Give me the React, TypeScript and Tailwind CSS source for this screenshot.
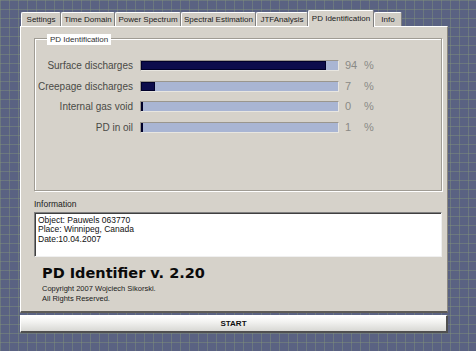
const rows = [
  { label: 'Surface discharges', value: 94 },
  { label: 'Creepage discharges', value: 7 },
  { label: 'Internal gas void', value: 0 },
  { label: 'PD in oil', value: 1 },
]

const tabs = [
  { name: 'Settings', w: 'w-[40px]' },
  { name: 'Time Domain', w: 'w-[54px]' },
  { name: 'Power Spectrum', w: 'w-[66px]' },
  { name: 'Spectral Estimation', w: 'w-[75px]' },
  { name: 'JTFAnalysis', w: 'w-[52px]' },
  { name: 'PD Identification', w: 'w-[66px]', active: true },
  { name: 'Info', w: 'w-[28px]' },
]

const sans = { fontFamily: '"Liberation Sans", Arial, sans-serif' }

export default function App() {
  return (
    <div
      className="w-[476px] h-[351px] overflow-hidden bg-[#5a6282] bg-[linear-gradient(rgba(140,160,120,0.35)_1px,transparent_1px),linear-gradient(90deg,rgba(140,160,120,0.35)_1px,transparent_1px)] bg-[size:9px_9px] pl-[20px] pt-[9px]"
      style={sans}
    >
      <div className="w-[428px] flex flex-col">
        {/* tabs */}
        <div className="flex items-end h-[17px] pl-[1px]">
          {tabs.map((t) =>
            t.active ? (
              <div
                key={t.name}
                className={`${t.w} h-[17px] -mb-[1px] relative z-10 bg-[#d6d2ca] border-t border-l border-white border-r border-r-[#808080] rounded-t-[2px] flex items-start justify-center pt-[2px] text-[8px] text-[#202020]`}
              >
                {t.name}
              </div>
            ) : (
              <div
                key={t.name}
                className={`${t.w} h-[14px] bg-[#d0ccc4] border-t border-l border-white border-r border-r-[#808080] rounded-t-[2px] flex items-center justify-center text-[8px] text-[#202020]`}
              >
                {t.name}
              </div>
            )
          )}
        </div>

        {/* panel */}
        <div className="h-[287px] bg-[#d6d2ca] border-t border-l border-white border-r border-r-[#8c8880] border-b-2 border-b-[#5c5a56] px-[13px] pt-[11px] flex flex-col">
          {/* group box */}
          <div className="relative h-[153px] w-[408px] border border-[#a09c94] shadow-[inset_1px_1px_0_#fff,1px_1px_0_#fff] pt-[21px]">
            <div className="absolute left-[12px] -top-[5px] bg-white px-[3px] h-[11px] flex items-center text-[8px] text-[#303030]">
              PD Identification
            </div>
            <div className="flex flex-col gap-[9.5px]">
              {rows.map((r) => (
                <div key={r.label} className="flex items-center h-[11px]">
                  <div className="w-[105px] text-right text-[10px] text-[#4a4a46] pr-[7px] whitespace-nowrap">
                    {r.label}
                  </div>
                  <div className="w-[199px] h-[11px] border border-[#9a968e] border-b-[#e8e6e0] border-r-[#e8e6e0] bg-[#a9b5d3] flex">
                    <div
                      className="h-full bg-[#0c0c4c] border border-[#00002a]"
                      style={{ width: `${Math.max(2, (r.value / 100) * 197)}px` }}
                    />
                  </div>
                  <div className="w-[25px] pl-[6px] text-[11px] text-[#8a8a86]">{r.value}</div>
                  <div className="text-[11px] text-[#8a8a86]">%</div>
                </div>
              ))}
            </div>
          </div>

          {/* information */}
          <div className="mt-[9px] text-[8.5px] text-[#202020] leading-none">Information</div>
          <div className="mt-[3px] w-[408px] h-[45px] bg-white border border-[#808080] border-b-[#f0f0f0] border-r-[#f0f0f0] shadow-[inset_1px_1px_0_#404040] px-[3px] pt-[3px] text-[8.5px] leading-[9.5px] text-[#101010]">
            <div>Object: Pauwels 063770</div>
            <div>Place: Winnipeg, Canada</div>
            <div>Date:10.04.2007</div>
          </div>

          {/* title */}
          <div
            className="mt-[6px] pl-[8px] text-[14.5px] font-bold leading-[20px] text-[#0a0a0a]"
            style={{ fontFamily: '"DejaVu Sans", Verdana, sans-serif' }}
          >
            PD Identifier v. 2.20
          </div>
          <div className="mt-[1px] pl-[8px] text-[7.5px] leading-[10px] text-[#202020]">
            <div>Copyright 2007 Wojciech Sikorski.</div>
            <div>All Rights Reserved.</div>
          </div>
        </div>

        {/* start button */}
        <div className="mt-[2px] w-[428px] h-[18px] bg-[linear-gradient(#ffffff,#f2f2f0_40%,#d8d8d4)] border-t border-l border-white border-r-2 border-r-[#505050] border-b-2 border-b-[#505050] flex items-center justify-center text-[8px] font-bold text-[#101010]">
          START
        </div>
      </div>
    </div>
  )
}
